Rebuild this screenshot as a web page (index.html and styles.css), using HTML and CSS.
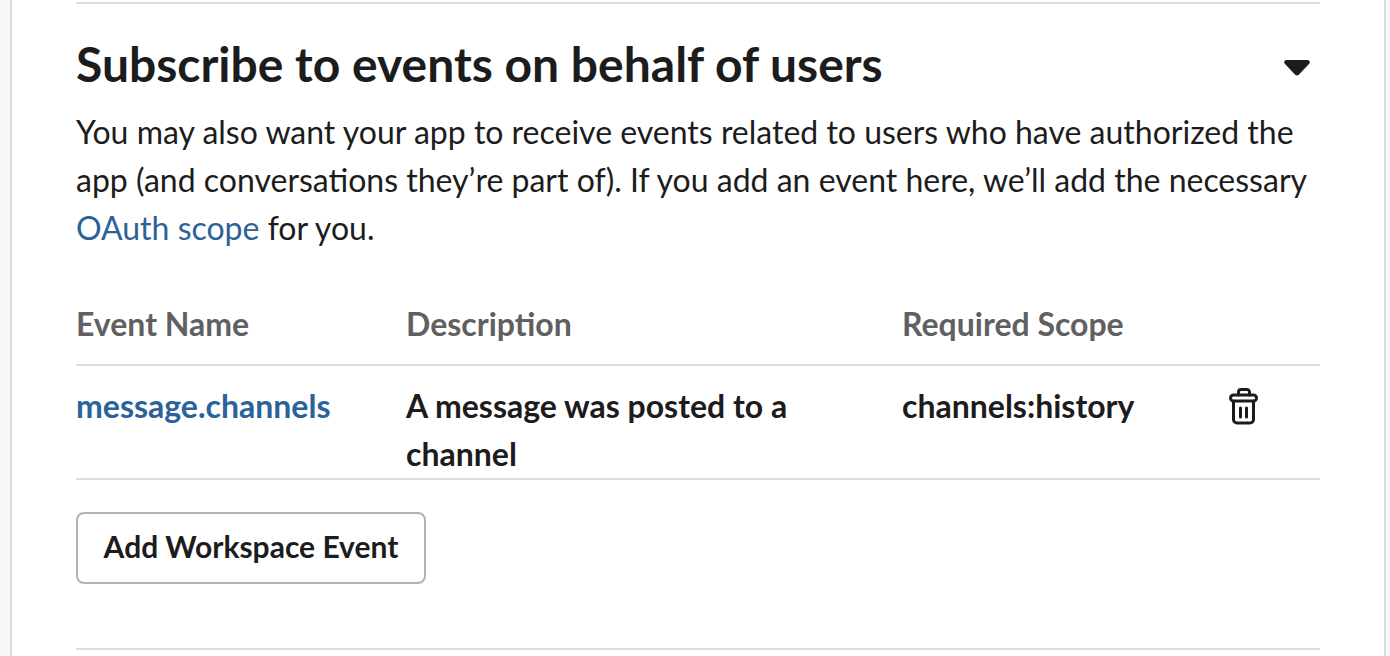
FILE: index.html
```html
<!DOCTYPE html>
<html lang="en">
<head>
<meta charset="utf-8">
<title>Subscribe to events</title>
<link rel="stylesheet" href="styles.css">
</head>
<body>
<main class="card">
  <section class="section">
    <div class="head">
      <h2 class="title">Subscribe to events on behalf of users</h2>
      <svg class="caret" viewBox="0 0 26 16" width="26" height="16" aria-hidden="true"><path d="M2.500 0h21c2 0 3 2.200 1.700 3.700L14.800 14.800c-1 1-2.600 1-3.600 0L.8 3.700C-.5 2.200.5 0 2.500 0z"/></svg>
    </div>
    <p class="intro">You may also want your app to receive events related to users who have authorized the app (and conversations they’re part of). If you add an event here, we’ll add the necessary <a href="#">OAuth scope</a> for you.</p>
    <div class="table">
      <div class="row header">
        <div>Event Name</div>
        <div>Description</div>
        <div>Required Scope</div>
        <div></div>
      </div>
      <div class="row body">
        <div><a href="#">message.channels</a></div>
        <div>A message was posted to a channel</div>
        <div>channels:history</div>
        <div class="action">
          <svg class="trash" viewBox="0 0 31 38" width="31" height="38" aria-hidden="true"><path d="M10.500 8V5a2.500 2.500 0 0 1 2.500-2.500h6A2.500 2.500 0 0 1 21.500 5v3M5.500 14v18.500a3.500 3.500 0 0 0 3.500 3.500h13a3.500 3.500 0 0 0 3.500-3.500V14M12.500 21v9M18.500 21v9" fill="none" stroke="#1d1c1d" stroke-width="3" stroke-linecap="round" stroke-linejoin="round"/><rect x="2.500" y="8" width="26" height="6" rx="3" fill="none" stroke="#1d1c1d" stroke-width="3"/></svg>
        </div>
      </div>
    </div>
    <button class="btn" type="button">Add Workspace Event</button>
  </section>
</main>
</body>
</html>
```
FILE: styles.css
```css
* { box-sizing: border-box; }
html, body { margin: 0; height: 100%; }
body {
  background: #f8f8f8;
  padding: 0 4px 0 10px;
  font-family: Lato, "Liberation Sans", sans-serif;
  color: #1d1c1d;
  overflow: hidden;
}
.card {
  background: #fff;
  height: 656px;
  border-left: 2px solid #dddddd;
  border-right: 2px solid #dddddd;
  padding: 2px 64px 0;
}
.section {
  height: 648px;
  border-top: 2px solid #dddddd;
  border-bottom: 2px solid #dddddd;
}
.head {
  display: flex;
  justify-content: space-between;
  align-items: center;
  padding: 30px 10px 0 0;
}
.title { margin: 0; font-size: 48px; line-height: 60px; font-weight: 700; }
.caret { fill: #1d1c1d; margin-top: 8px; }
.intro { margin: 14px 0 0; font-size: 32px; line-height: 48px; }
a { color: #2a6299; text-decoration: none; }
.table { margin-top: 48px; }
.row {
  display: grid;
  grid-template-columns: 330px 496px 326px 92px;
  font-size: 32px;
  line-height: 48px;
  border-bottom: 2px solid #dddddd;
}
.header { color: #616061; font-weight: 700; padding: 0 0 16px; }
.body { font-weight: 700; padding: 16px 0 0; height: 114px; }
.body > div:nth-child(2) { padding-right: 100px; }
.action { padding-top: 5px; }
.trash { display: block; }
.btn {
  display: block;
  margin-top: 32px;
  width: 350px;
  height: 72px;
  background: #fff;
  border: 2px solid #b3b3b3;
  border-radius: 8px;
  color: #1d1c1d;
  font: 700 30px/40px Lato, "Liberation Sans", sans-serif;
  padding: 0 0 4px;
}
```
